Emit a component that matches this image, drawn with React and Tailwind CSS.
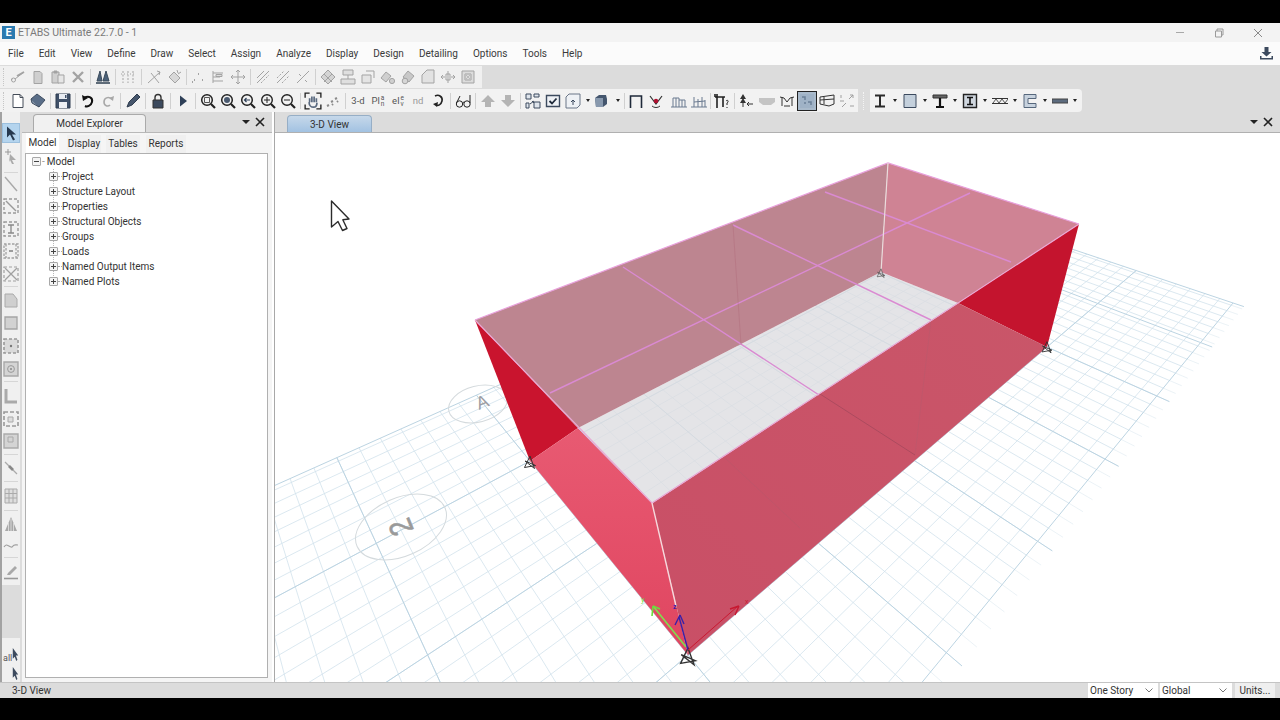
import React from "react";

/* ---------- ground grid (perspective plane of the model) ---------- */
const Q = [[530, 461], [881, 273], [1047, 347], [688, 655]];
function makeH() {
  const [[x0, y0], [x1, y1], [x2, y2], [x3, y3]] = Q;
  const dx1 = x1 - x2, dx2 = x3 - x2, sx = x0 - x1 + x2 - x3;
  const dy1 = y1 - y2, dy2 = y3 - y2, sy = y0 - y1 + y2 - y3;
  const den = dx1 * dy2 - dx2 * dy1;
  const g = (sx * dy2 - dx2 * sy) / den, h = (dx1 * sy - sx * dy1) / den;
  return [x1 - x0 + g * x1, x3 - x0 + h * x3, x0, y1 - y0 + g * y1, y3 - y0 + h * y3, y0, g, h, 1];
}
const H = makeH();
const fw = (u, v) => {
  const w = H[6] * u + H[7] * v + 1;
  return [(H[0] * u + H[1] * v + H[2]) / w, (H[3] * u + H[4] * v + H[5]) / w];
};
const inv = (x, y) => {
  const [a, b, c, d, e, f, g, h, i] = H;
  const A = e * i - f * h, B = c * h - b * i, C = b * f - c * e;
  const D = f * g - d * i, E = a * i - c * g, F = c * d - a * f;
  const G = d * h - e * g, I = b * g - a * h, J = a * e - b * d;
  const w = G * x + I * y + J;
  return [(A * x + B * y + C) / w, (D * x + E * y + F) / w];
};
const [UMAX, VMAX] = inv(1233, 303);
const VMIN = inv(450, 407)[1];
const UMIN = -0.95;
const EXT = 0.05;
const seg = (p, q) => `M${p[0].toFixed(1)} ${p[1].toFixed(1)}L${q[0].toFixed(1)} ${q[1].toFixed(1)}`;
const range = (a, b, s) => { const r = []; for (let n = Math.ceil(a / s); n * s <= b + 1e-6; n++) r.push(n * s); return r; };

const minorU = range(UMIN, UMAX, 1 / 28);
const minorV = range(VMIN, VMAX, 1 / 14);
const MINOR = minorU.map((u) => seg(fw(u, VMIN), fw(u, VMAX))).join("") + minorV.map((v) => seg(fw(UMIN, v), fw(UMAX, v))).join("");
const FADE = minorU.map((u) => seg(fw(u, VMAX), fw(u, VMAX + EXT))).join("");
const majorU = [...range(UMIN, 1, 0.25), inv(1136, 318)[0], UMAX];
const majorV = [VMIN, ...range(VMIN + 0.08, VMAX - 0.08, 0.5), VMAX];
const MAJOR = majorU.map((u) => seg(fw(u, VMIN), fw(u, VMAX + EXT))).join("") + majorV.map((v) => seg(fw(UMIN, v), fw(UMAX, v))).join("");

const Support = ({ x, y, s = 1, c = "#333" }) => (
  <g transform={`translate(${x} ${y}) scale(${s})`} fill="none" stroke={c} strokeWidth="1">
    <path d="M0 -6L-5.5 5.5L5.5 3.5L-5 -1L4.5 6.5Z" />
  </g>
);

function Model() {
  return (
    <svg viewBox="275 133 1005 549" className="block w-full h-full">
      <defs>
        <linearGradient id="wallL" x1="0" y1="0" x2="0" y2="1">
          <stop offset="0" stopColor="#e85a72" />
          <stop offset="1" stopColor="#e04560" />
        </linearGradient>
        <linearGradient id="wallR" x1="1" y1="0" x2="0" y2="1">
          <stop offset="0" stopColor="#c95669" />
          <stop offset="1" stopColor="#c94f66" />
        </linearGradient>
      </defs>
      <path d={MINOR} stroke="#d2e2ec" strokeWidth="0.8" fill="none" />
      <path d={FADE} stroke="#e6eff4" strokeWidth="0.8" fill="none" />
      <path d={MAJOR} stroke="#bcd4e2" strokeWidth="1" fill="none" />

      <ellipse cx="401" cy="527" rx="48" ry="29" transform="rotate(-24 401 527)" fill="none" stroke="#d4dadd" strokeWidth="1" />
      <ellipse cx="478" cy="404" rx="30" ry="18" transform="rotate(-14 478 404)" fill="none" stroke="#d4dadd" strokeWidth="1" />
      <text x="0" y="0" transform="translate(414 530) rotate(-112) scale(1 1.2)" fontSize="27" fill="#9a9a9a" stroke="#9a9a9a" strokeWidth="0.5" fontFamily="Liberation Sans, sans-serif">2</text>
      <text x="0" y="0" transform="translate(479 410) rotate(-22)" fontSize="18" fill="#9c9ca2" fontFamily="Liberation Sans, sans-serif">A</text>

      {/* floor band */}
      <polygon points="578,428 652,503 958,303 881,272" fill="#dcdce0" fillOpacity="0.78" />
      {/* dark side wedges */}
      <polygon points="475,320 530,461 578,428" fill="#c9142e" />
      <polygon points="1079,224 1047,347 958,303" fill="#c4142e" />
      {/* roof */}
      <polygon points="475,320 888,163 881,272 578,428" fill="#bd8590" />
      <polygon points="888,163 1079,224 958,303 881,272" fill="#cf8394" />
      {/* front walls */}
      <polygon points="530,461 578,428 652,503 688,655" fill="url(#wallL)" />
      <polygon points="652,503 958,303 1047,347 688,655" fill="url(#wallR)" />

      {/* roof beams */}
      <g stroke="#da8ad2" strokeWidth="1.4" fill="none">
        <path d="M970 193L550 393" />
        <path d="M825 192L1011 262" />
        <path d="M733 225L931 320" />
        <path d="M623 267L819 395" />
      </g>
      {/* faint lines */}
      <g stroke="#a95f70" strokeWidth="0.7" fill="none" strokeOpacity="0.4">
        <path d="M733 225L741 345" />
        <path d="M931 320L915 455" />
        <path d="M725 458L800 528" />
      </g>
      <path d="M820 394L915 455" stroke="#a4485c" strokeWidth="0.8" fill="none" />
      <path d="M578 428L652 503L958 303" stroke="#cfc3e4" strokeWidth="1" fill="none" />
      <path d="M475 320L888 163L1079 224" stroke="#e8a0dc" strokeWidth="1.2" fill="none" />
      <path d="M1079 224L652 503L475 320" stroke="#eaa8d4" strokeWidth="1.2" fill="none" />
      <path d="M888 163L881 272" stroke="#eadcdc" strokeWidth="1.2" />
      <path d="M652 503L676 606" stroke="#f6d8dc" strokeWidth="1.4" />

      <Support x={530} y={462} />
      <Support x={1047} y={347} s={0.9} />
      <Support x={881} y={273} s={0.7} c="#555" />
      <Support x={688} y={656} s={1.35} />

      {/* axes */}
      <path d="M686 647L653 606" stroke="#7ee04e" strokeWidth="1.6" fill="none" />
      <path d="M653 606L652 616M653 606L660 609" stroke="#6cdc3c" strokeWidth="1.6" fill="none" />
      <path d="M688 650L679 617" stroke="#3a20a8" strokeWidth="1.4" fill="none" />
      <path d="M680 615L675 625M680 615L684 624" stroke="#3a20a8" strokeWidth="1.4" fill="none" />
      <path d="M688 650L738 606" stroke="#c81830" strokeWidth="1" fill="none" />
      <path d="M739 606L730 609M739 606L735 615" stroke="#c81830" strokeWidth="1.4" fill="none" />
      <text x="673" y="609" fontSize="7" fill="#3a20a8" fontFamily="Liberation Sans, sans-serif" fontWeight="700">z</text>
      <text x="745" y="604" fontSize="7" fill="#c81830" fontFamily="Liberation Sans, sans-serif">x</text>
      <text x="641" y="602" fontSize="7" fill="#6cdc3c" fontFamily="Liberation Sans, sans-serif">y</text>

      {/* mouse cursor */}
      <path d="M331.5 201L331.5 227L338 221.5L342.5 230.5L347 228.5L342.8 219.8L349 219Z" fill="#fff" stroke="#2b2b2b" strokeWidth="1.4" strokeLinejoin="round" />
    </svg>
  );
}

/* ---------- icons ---------- */
const G = "#a3a3a3";
const S = ({ children, size = 16 }) => (
  <svg viewBox="0 0 16 16" width={size} height={size} fill="none" stroke={G} strokeWidth="1">{children}</svg>
);
const I = {
  scissors: <S><path d="M14 3L5 10M2 9.5L1.5 11" /><circle cx="3.5" cy="11" r="2" /><path d="M14 3L7 7" strokeWidth="2" /></S>,
  copy: <S><path d="M4 2.5h6l2 2v10H4z" fill="#cfcfcf" /></S>,
  paste: <S><path d="M2 3h7v11H2z" fill="#d0d0d0" /><path d="M8 6h6v8H8z" fill="#e6e6e6" /><path d="M4 2h3v2H4z" fill={G} /></S>,
  xBig: <S><path d="M3 3L13 13M13 3L3 13" strokeWidth="2.4" /></S>,
  towers: <S><path d="M5 2L7 12H2zM11 2L14 12H8z" fill="#4a6078" stroke="#3a4a5a" /><path d="M1 14h14" stroke="#3a4a5a" strokeWidth="1.6" /></S>,
  gridDots: <S><path d="M3 2v12M8 2v12M13 2v12" strokeDasharray="2 1.5" /><path d="M1 5h14" strokeDasharray="1 2" /></S>,
  crossLine: <S><path d="M2 14L14 3M5 4l8 10" /><path d="M11 2l3 1-1 3" /></S>,
  diamondCross: <S><path d="M3 8l5-5 6 6-5 5z" fill="#d8d8d8" /><path d="M11 1l1 3M15 3l-3 2" /></S>,
  dotsTri: <S><path d="M8 5h1M4 11h1M12 11h1M2 13h1" strokeWidth="2" /></S>,
  listAlign: <S><path d="M3 2v12M3 4h10M3 8h7M3 12h10" /><path d="M6 5.5h6v2H6z" fill="#ddd" /></S>,
  move: <S><path d="M8 1v14M1 8h14M6 3l2-2 2 2M6 13l2 2 2-2M3 6L1 8l2 2M13 6l2 2-2 2" /></S>,
  slashA: <S><path d="M2 14L14 2M2 9L9 2" /><path d="M6 14L14 6" strokeDasharray="2 1.5" /></S>,
  slashB: <S><path d="M2 14L14 2" /><path d="M2 9L9 2M7 14l7-7" strokeDasharray="2 1.5" /></S>,
  slashC: <S><path d="M2 14L14 2" /><path d="M4 5l2 2M10 11l2 2" /></S>,
  diamond: <S><path d="M1 8l7-7 7 7-7 7z" fill="#d4d4d4" /><path d="M4 5l8 8M12 5l-8 8" /></S>,
  stack: <S><path d="M3 1h10v5H3zM1 10h14v5H1z" fill="#dfdfdf" /><path d="M8 6v4" /></S>,
  boxSm: <S><path d="M2 6h9v8H2z" fill="#e4e4e4" /><path d="M6 2h8v7" /></S>,
  cube1: <S><path d="M1 9l5-6 5 4-5 6z" fill="#cfcfcf" /><circle cx="12" cy="12" r="2.6" fill="#cfcfcf" /></S>,
  cube2: <S><path d="M3 8l5-6 6 5-5 6z" fill="#c8c8c8" /><circle cx="5" cy="12" r="2.8" fill="#d6d6d6" /></S>,
  pageG: <S><path d="M2 14V6l5-5h7v13z" fill="#e2e2e2" /></S>,
  crossArrow: <S><path d="M8 2v12M2 8h3M11 8h3M6 5h4v6H6z" /><path d="M3 6L1 8l2 2M13 6l2 2-2 2" /></S>,
  boxBox: <S><path d="M2 2h12v12H2z" fill="#dcdcdc" /><path d="M5 5h6v6H5z" /><path d="M5 5l6 6M11 5l-6 6" stroke="#bbb" /></S>,

  page: <S><path d="M3 1.5h7l3 3v10H3z" fill="#fff" stroke="#444c58" /><path d="M10 1.5v3h3" stroke="#444c58" /></S>,
  open: <S><path d="M1 6l6-5 8 6-6 7z" fill="#5a6e88" stroke="#3d4c60" /><path d="M1 6l1 4 7 4" stroke="#3d4c60" fill="#8496ac" /></S>,
  save: <S><path d="M1 1h14v14H1z" fill="#3f5068" stroke="#2f3d50" /><path d="M4 1h8v5H4z" fill="#e8ecf2" stroke="none" /><path d="M4 9h8v6H4z" fill="#eef0f4" stroke="none" /><path d="M10 2h1.5v3H10z" fill="#3f5068" stroke="none" /></S>,
  undo: <S><path d="M4 5c5-3 9 0 8 4s-5 5-7 4" stroke="#111" strokeWidth="2" /><path d="M2 2l1 6 5-3z" fill="#111" stroke="none" /></S>,
  redo: <S><path d="M12 6c-4-3-8-1-8 3s4 5 6 3" stroke="#a8a8a8" strokeWidth="1.6" /><path d="M14 3l-1 5-4-3z" fill="#a8a8a8" stroke="none" /></S>,
  pencil: <S><path d="M2 14l2-5 8-8 3 3-8 8z" fill="#46566c" stroke="#2f3c4e" /></S>,
  lock: <S><path d="M5 7V4.5a3 3 0 0 1 6 0V7" stroke="#333" strokeWidth="1.4" /><path d="M3 7h10v8H3z" fill="#3c4a5e" stroke="#333" /></S>,
  play: <S><path d="M5 2.5l7 5.5-7 5.5z" fill="#2f4058" stroke="none" /></S>,
  zoomRect: <S><circle cx="7" cy="7" r="5.3" stroke="#222" strokeWidth="1.5" /><path d="M11 11l4 4" stroke="#222" strokeWidth="2.2" /><path d="M4.5 4.5h5v5h-5z" stroke="#555" /></S>,
  zoomFill: <S><circle cx="7" cy="7" r="5.3" stroke="#222" strokeWidth="1.5" /><path d="M11 11l4 4" stroke="#222" strokeWidth="2.2" /><circle cx="7" cy="7" r="3" fill="#4a5a70" stroke="none" /></S>,
  zoomBack: <S><circle cx="7" cy="7" r="5.3" stroke="#222" strokeWidth="1.5" /><path d="M11 11l4 4" stroke="#222" strokeWidth="2.2" /><path d="M10 7H4.5M6.5 5L4.5 7l2 2" stroke="#2f4058" strokeWidth="1.2" /></S>,
  zoomPlus: <S><circle cx="7" cy="7" r="5.3" stroke="#222" strokeWidth="1.4" /><path d="M11 11l4 4" stroke="#222" strokeWidth="2.2" /><path d="M4 7h6M7 4v6" stroke="#222" /></S>,
  zoomMinus: <S><circle cx="7" cy="7" r="5.3" stroke="#222" strokeWidth="1.4" /><path d="M11 11l4 4" stroke="#222" strokeWidth="2.2" /><path d="M4 7h6" stroke="#222" /></S>,
  hand: <S size={18}><path d="M1 5V1h4M11 1h4v4M15 11v4h-4M5 15H1v-4" stroke="#222" strokeWidth="1.2" /><path d="M5 9V5.5M7 9V4M9 9V4M11 9V5.5M4.5 9c0 3 2 4.5 4 4.5s3-1 3-4" stroke="#5a6a80" strokeWidth="1.5" /></S>,
  dots2: <S><path d="M2 13l2-1M6 9l2-1M10 6l2-1M12 9l1-1M7 12l1-1" stroke="#8a8a8a" strokeWidth="2" /></S>,
  rotate: <S><path d="M5 3c4-2 8 1 7 5s-4 5-6 4" stroke="#222" strokeWidth="1.6" /><path d="M3 11l5-2-1 5z" fill="#222" stroke="none" /></S>,
  glasses: <S><circle cx="4.5" cy="11" r="3.2" stroke="#222" /><circle cx="12" cy="11" r="3.2" stroke="#222" /><path d="M7.5 10c1-1 1.5-1 2 0M1.5 10L5 3M15 10V2" stroke="#222" /></S>,
  up: <S><path d="M8 2l7 7h-4v5H5V9H1z" fill="#b4b4b4" stroke="none" /></S>,
  down: <S><path d="M8 14l7-7h-4V2H5v5H1z" fill="#b4b4b4" stroke="none" /></S>,
  squares: <S><path d="M1 1h5v5H1zM9 1h5v3H9zM1 10h3v5H1zM9 9h6v6H9z" stroke="#3c4a5e" fill="#dfe5ec" /><path d="M7 8l2 2M5 11l4-3" stroke="#3c4a5e" /></S>,
  check: <S><path d="M1.5 2.5h13v11h-13z" fill="#eef1f5" stroke="#3c4a5e" strokeWidth="1.4" /><path d="M4.5 8l2.5 2.5 4.5-5" stroke="#1f2a3a" strokeWidth="1.8" /></S>,
  cubeUp: <S><path d="M1 4l3-3h11v11l-3 3H1z" fill="#eef1f5" stroke="#6a7688" /><path d="M8 12V7M6 9l2-2 2 2" stroke="#3c4a5e" /></S>,
  cubeDark: <S><path d="M2 5l4-3h7l1 4v5l-4 3H3z" fill="#44566e" stroke="none" /><path d="M2 5h8v9H3z" fill="#8899ae" stroke="none" /></S>,
  portal: <S><path d="M2.5 15V3h11v12" stroke="#1f2a3a" strokeWidth="1.6" /></S>,
  vPin: <S><path d="M2 3l6 8 6-8" stroke="#333" strokeWidth="1.2" /><circle cx="8" cy="8" r="2.2" fill="#b01030" stroke="none" /><path d="M4 13c2 2 6 2 8 0" stroke="#333" /></S>,
  frame1: <S><path d="M0 14h16M2 14V5h6v9M8 7h6v7M5 5v9M11 7v7" stroke="#6a7a90" /></S>,
  frame2: <S><path d="M0 14h16M3 14V4M7 14V6M11 14V4M14 14V7M3 9l11-1" stroke="#6a7a90" /></S>,
  frameQ: <S><path d="M1 4h10M3 1v14M9 4v10M1 1v3" stroke="#222" strokeWidth="1.6" /><path d="M12 8c2-2 3 1 1 2v2M13 14v1" stroke="#222" /></S>,
  treeArrow: <S><path d="M5 1l3 5H2zM5 5l3 5H2z" fill="#333" stroke="none" /><path d="M5 10v4" stroke="#333" /><path d="M15 11H9M11 9l-2 2 2 2" stroke="#333" /></S>,
  bowl: <S><path d="M0 5h16v4l-4 3H4L0 9z" fill="#c4c4c4" stroke="none" /></S>,
  mShape: <S><path d="M1 4l4 1 3 4 3-4 4-1M3 4v9M13 4v9M5 13h6" stroke="#333" /></S>,
  selected: <S><path d="M1 1h14v14H1z" fill="#9fb2c6" stroke="none" /><path d="M3 4h3v3M9 9h3v3M5 10h2" stroke="#6b8098" strokeWidth="1.5" /></S>,
  mask: <S><path d="M1 4l14-2v9l-5 2-9-2z" stroke="#333" /><path d="M1 7l14-1M5 4v7" stroke="#333" /></S>,
  arrowsG: <S><path d="M3 14l4-4M10 6l4-4M14 2v3M14 2h-3M2 5V2M1 8h4M11 13h4" stroke="#a0a0a0" /></S>,

  beamI: <S><path d="M3 2.5h10M3 13.5h10M8 2.5v11" stroke="#2a2a2a" strokeWidth="2" /></S>,
  rectBox: <S><path d="M2 1.5h12v13H2z" fill="#c4d0dc" stroke="#3c4a5e" /></S>,
  beamT: <S><path d="M1 2h14v3H1z" fill="#666" stroke="#333" /><path d="M8 5v8M4 14h8" stroke="#111" strokeWidth="2.2" /></S>,
  beamBox: <S><path d="M1.5 1.5h13v13h-13z" fill="#cfd6de" stroke="#222" strokeWidth="1.4" /><path d="M5 4.5h6M5 11.5h6M8 4.5v7" stroke="#111" strokeWidth="1.6" /></S>,
  truss: <S><path d="M0 5.5h16M0 10.5h16" stroke="#333" /><path d="M1 10l3-4 3 4 3-4 3 4 3-4" stroke="#555" /></S>,
  cBeam: <S><path d="M2 1.5h12v4H6v5h8v4H2z" fill="#c7d2de" stroke="#56677c" /></S>,
  bar: <S><path d="M0 6h16v4H0z" fill="#5c6b7e" stroke="#444" /></S>,

  arrowDark: <S size={17}><path d="M4 1l9 8H9l3 5-2 1-3-6-3 3z" fill="#26384e" stroke="none" /></S>,
  arrowCross: <S><path d="M5 0v6M2 3h6" stroke="#999" /><path d="M7 5l6 6H9l2 4h-2l-2-4-1 2z" fill="#aaa" stroke="none" /></S>,
  line: <S><path d="M2 1l12 14" stroke="#a8a8a8" strokeWidth="1.4" /></S>,
  dashDiag: <S><path d="M1 1h14v14H1z" strokeDasharray="3 2" stroke="#999" strokeWidth="1.4" /><path d="M3 3l10 10" stroke="#999" strokeWidth="1.4" /></S>,
  dashI: <S><path d="M1 1h14v14H1z" strokeDasharray="3 2" stroke="#999" strokeWidth="1.4" /><path d="M5 4h6M5 12h6M8 4v8" stroke="#888" strokeWidth="1.3" /></S>,
  dashCol: <S><path d="M1 1h14v14H1zM3 1v14M13 1v14" strokeDasharray="2.5 1.5" stroke="#a0a0a0" strokeWidth="1.3" /><path d="M6 8h4" stroke="#888" strokeWidth="1.6" /></S>,
  dashX: <S><path d="M1 1h14v14H1z" strokeDasharray="3 2" stroke="#a0a0a0" strokeWidth="1.2" /><path d="M2 2l12 12M14 2L2 14" stroke="#a0a0a0" strokeWidth="1.3" /></S>,
  pageShape: <S><path d="M2 2h8l4 5v8H2z" fill="#cfcfcf" stroke="#aaa" /></S>,
  square: <S><path d="M2 2h12v12H2z" fill="#d2d2d2" stroke="#a5a5a5" strokeWidth="1.3" /></S>,
  dashCenter: <S><path d="M1 1h14v14H1z" strokeDasharray="3 2" stroke="#999" strokeWidth="1.6" fill="#dadada" /><circle cx="8" cy="8" r="1.2" fill="#777" stroke="none" /></S>,
  circSq: <S><path d="M1 1h14v14H1z" fill="#d4d4d4" stroke="#a8a8a8" strokeWidth="1.4" /><circle cx="8" cy="8" r="3.4" stroke="#999" /><circle cx="8" cy="8" r="1" fill="#888" stroke="none" /></S>,
  lShape: <S><path d="M3 1v13h11" stroke="#aaa" strokeWidth="3" /></S>,
  dashDot: <S><path d="M1 1h14v14H1z" strokeDasharray="4 2" stroke="#999" strokeWidth="1.6" /><path d="M5 6h5v5H5z" stroke="#aaa" fill="#ddd" /></S>,
  squareIn: <S><path d="M1 1h14v14H1z" fill="#d4d4d4" stroke="#aaa" strokeWidth="1.4" /><path d="M5 4h5v5H5z" stroke="#aaa" /></S>,
  lineDots: <S><path d="M2 2l12 12" stroke="#aaa" strokeWidth="1.2" /><path d="M6 6l4 4" stroke="#888" strokeWidth="2.6" /></S>,
  gridI: <S><path d="M2 1h12v14H2zM2 5.5h12M2 10h12M6 1v14M10 1v14" stroke="#aaa" fill="#dedede" /></S>,
  treeI: <S><path d="M8 1l6 14H2z" fill="#a8a8a8" stroke="none" /><path d="M5.5 6v9M8 3v12M10.5 6v9" stroke="#d8d8d8" /></S>,
  wave: <S><path d="M1 9c2-3 3-2 5-1s3 2 4 0 3-1 5-1" stroke="#9f9f9f" strokeWidth="1.2" /></S>,
  penLine: <S><path d="M1 14.5h14" stroke="#999" strokeWidth="1.6" /><path d="M4 11l1-2 7-7 2 2-7 7z" fill="#a8a8a8" stroke="none" /></S>,
};

/* ---------- small building blocks ---------- */
const Btn = ({ name, w = "w-5" }) => (
  <div className={`${w} h-5 flex items-center justify-center shrink-0`}>{I[name]}</div>
);
const Sep = ({ w = "w-[5px]" }) => (
  <div className={`${w} h-[16px] flex justify-center shrink-0`}><div className="w-px h-full bg-[#d0d0d0]" /></div>
);
const Gap = ({ w }) => <div className={`${w} shrink-0`} />;
const Caret = ({ w = "w-[10px]" }) => (
  <div className={`${w} h-5 flex items-center justify-center shrink-0`}>
    <div className="w-0 h-0 border-x-[2.5px] border-x-transparent border-t-[3px] border-t-[#222]" />
  </div>
);
const TextBtn = ({ children, c = "text-[#555]" }) => (
  <div className={`w-5 h-5 flex items-center justify-center shrink-0 text-[9.5px] ${c}`}>{children}</div>
);
const Stack = ({ a, top, bottom, c }) => (
  <TextBtn c={c}>
    <span>{a}</span>
    <span className="flex flex-col text-[6.5px] leading-[6px] ml-[1px]"><span>{top}</span><span>{bottom}</span></span>
  </TextBtn>
);
const Grip = () => (
  <div className="w-[5px] h-[18px] shrink-0 border-l border-dotted border-[#c6c6c6] ml-[1px]" />
);

const Toolbar1 = () => (
  <div className="h-[22px] w-[482px] bg-[#f0f0f0] flex items-center pl-[2px]">
    <Grip />
    <Btn name="scissors" /><Btn name="copy" /><Btn name="paste" /><Btn name="xBig" />
    <Sep /><Btn name="towers" /><Sep /><Btn name="gridDots" /><Sep w="w-[6px]" /><Btn name="crossLine" /><Btn name="diamondCross" />
    <Sep w="w-[4px]" /><Btn name="dotsTri" /><Btn name="listAlign" /><Btn name="move" />
    <Sep /><Btn name="slashA" /><Btn name="slashB" /><Btn name="slashC" />
    <Sep /><Btn name="diamond" /><Btn name="stack" /><Btn name="boxSm" /><Btn name="cube1" /><Btn name="cube2" /><Btn name="pageG" /><Btn name="crossArrow" /><Btn name="boxBox" />
  </div>
);

const Toolbar2 = () => (
  <div className="h-[23px] w-[858px] bg-[#f2f2f2] flex items-center pl-[2px]">
    <Grip />
    <Btn name="page" /><Btn name="open" /><Sep /><Btn name="save" /><Sep /><Btn name="undo" /><Btn name="redo" />
    <Sep /><Btn name="pencil" /><Sep /><Btn name="lock" /><Sep /><Btn name="play" /><Sep />
    <Btn name="zoomRect" /><Btn name="zoomFill" /><Btn name="zoomBack" /><Btn name="zoomPlus" /><Btn name="zoomMinus" /><Sep />
    <Btn name="hand" /><Btn name="dots2" /><Sep />
    <TextBtn>3-d</TextBtn>
    <Stack a="Pl" top="a" bottom="n" />
    <Stack a="el" top="e" bottom="v" />
    <TextBtn c="text-[#999]">nd</TextBtn>
    <Btn name="rotate" /><Sep /><Btn name="glasses" /><Sep /><Btn name="up" /><Btn name="down" /><Sep />
    <Btn name="squares" /><Btn name="check" /><Btn name="cubeUp" /><Caret /><Btn name="cubeDark" w="w-[16px]" /><Gap w="w-[4px]" /><Caret /><Sep w="w-[3px]" />
    <Btn name="portal" /><Btn name="vPin" /><Gap w="w-[3px]" /><Btn name="frame1" /><Btn name="frame2" /><Sep w="w-[3px]" /><Btn name="frameQ" /><Sep w="w-[4px]" /><Btn name="treeArrow" />
    <Gap w="w-[1px]" /><Btn name="bowl" /><Btn name="mShape" />
    <div className="w-5 h-5 flex items-center justify-center shrink-0 border border-[#222] bg-[#a9bacb]">{I.selected}</div>
    <Btn name="mask" /><Btn name="arrowsG" />
  </div>
);

const Toolbar3 = () => (
  <div className="h-[23px] w-[212px] bg-[#f2f2f2] rounded-r-sm flex items-center">
    <Btn name="beamI" /><Caret />
    <Btn name="rectBox" /><Caret />
    <Btn name="beamT" /><Caret />
    <Btn name="beamBox" /><Caret />
    <Btn name="truss" /><Caret />
    <Btn name="cBeam" /><Caret />
    <Btn name="bar" /><Caret />
  </div>
);

const Menu = ["File", "Edit", "View", "Define", "Draw", "Select", "Assign", "Analyze", "Display", "Design", "Detailing", "Options", "Tools", "Help"];
const TREE = ["Project", "Structure Layout", "Properties", "Structural Objects", "Groups", "Loads", "Named Output Items", "Named Plots"];

const Box = ({ minus }) => (
  <div className="relative w-[9px] h-[9px] border border-[#a8a8a8] bg-[#f4f4f4] shrink-0 flex items-center justify-center rounded-[1px]">
    <div className="w-[5px] h-px bg-[#444]" />
    {!minus && <div className="absolute w-px h-[5px] bg-[#444]" />}
  </div>
);

const StripIcon = ({ name, h = "h-[23px]" }) => (
  <div className={`${h} flex items-center justify-center`}>{I[name]}</div>
);
const StripSep = () => <div className="h-px mx-[2px] my-[1px] bg-[#d6d6d6]" />;

const Close = ({ c = "#222" }) => (
  <svg width="10" height="10" viewBox="0 0 10 10" fill="none" stroke={c} strokeWidth="1.6"><path d="M1 1l8 8M9 1l-8 8" /></svg>
);

export default function App() {
  return (
    <div className="w-[1280px] h-[720px] overflow-hidden bg-black flex flex-col text-[10px] leading-none text-[#333]" style={{ fontFamily: 'Roboto, "Noto Sans", sans-serif' }}>
      <div className="h-[23px] shrink-0 bg-black" />
      {/* title bar */}
      <div className="h-[19px] shrink-0 bg-[#f3f3f3] flex items-center pl-[2px]">
        <div className="w-[13px] h-[13px] bg-[#2a7ab0] text-white text-[11px] font-bold flex items-center justify-center">E</div>
        <span className="ml-[3px] pt-px text-[10.5px] text-[#7a7a7a]">ETABS Ultimate 22.7.0 - 1</span>
        <div className="ml-auto flex items-center">
          <div className="w-[39px] flex justify-center"><div className="w-[8px] h-px bg-[#a8a8a8]" /></div>
          <div className="w-[39px] flex justify-center">
            <svg width="10" height="10" viewBox="0 0 10 10" fill="none" stroke="#9a9a9a"><path d="M1.5 3h6v6h-6zM3 3V1h6v6H7.5" /></svg>
          </div>
          <div className="w-[39px] flex justify-center"><svg width="10" height="10" viewBox="0 0 10 10" fill="none" stroke="#8a8a8a"><path d="M1 1l8 8M9 1l-8 8" /></svg></div>
          <div className="w-[3px]" />
        </div>
      </div>
      {/* menu bar */}
      <div className="h-[23px] shrink-0 bg-[#fbfbfb] flex items-center pl-[8px] gap-[15px] text-[#3a3a3a]">
        {Menu.map((m) => <span key={m} className="pt-px">{m}</span>)}
        <div className="ml-auto mr-[6px]">
          <svg width="15" height="15" viewBox="0 0 15 15" fill="#3c4a5e"><path d="M5.5 1h4v5h3L7.5 10.5 2.5 6h3z" /><path d="M1 10v3.5h13V10h-1.5v2h-10v-2z" /></svg>
        </div>
      </div>
      {/* toolbars */}
      <div className="h-[47px] shrink-0 bg-[#dcdcdc] flex flex-col pt-[1px] gap-px">
        <Toolbar1 />
        <div className="flex">
          <Toolbar2 />
          <div className="w-[12px] flex justify-center items-center"><div className="w-[3px] h-[18px] border-l border-dotted border-[#f4f4f4]" /></div>
          <Toolbar3 />
        </div>
      </div>
      {/* body */}
      <div className="h-[570px] shrink-0 flex">
        {/* left tool strip */}
        <div className="w-[22px] shrink-0 flex bg-[#dcdcdc]">
          <div className="w-[2px] bg-[#a2a2a2]" />
          <div className="w-[18px] bg-[#f0f0f0] flex flex-col pt-[11px]">
            <div className="h-[20px] bg-[#b4d4ee] flex items-center justify-center border border-[#9cc0de]">{I.arrowDark}</div>
            <StripIcon name="arrowCross" h="h-[28px]" />
            <StripSep />
            <StripIcon name="line" h="h-[20px]" />
            <StripIcon name="dashDiag" />
            <StripIcon name="dashI" />
            <StripIcon name="dashCol" h="h-[22px]" />
            <StripIcon name="dashX" />
            <StripSep />
            <StripIcon name="pageShape" h="h-[24px]" />
            <StripIcon name="square" h="h-[22px]" />
            <StripIcon name="dashCenter" />
            <StripIcon name="circSq" />
            <StripSep />
            <StripIcon name="lShape" h="h-[26px]" />
            <StripIcon name="dashDot" h="h-[20px]" />
            <StripIcon name="squareIn" h="h-[24px]" />
            <StripSep />
            <StripIcon name="lineDots" h="h-[24px]" />
            <StripSep />
            <StripIcon name="gridI" h="h-[26px]" />
            <StripSep />
            <StripIcon name="treeI" h="h-[24px]" />
            <StripIcon name="wave" h="h-[20px]" />
            <StripSep />
            <StripIcon name="penLine" h="h-[26px]" />
            <div className="h-[53px] bg-[#dcdcdc]" />
            <div className="h-[28px] relative flex items-end text-[9px] text-[#555] pb-[3px] pl-[1px]">
              <span>all</span>
              <div className="absolute right-[1px] top-[9px]">
                <svg width="7" height="15" viewBox="0 0 9 14" fill="#3c4a5e" preserveAspectRatio="none"><path d="M1 1l7 7H5l2 4-1.5 1-2-4L1 11z" /></svg>
              </div>
            </div>
            <div className="h-[16px] flex justify-end pr-[1px] overflow-hidden">
              <svg width="7" height="14" viewBox="0 0 9 13" fill="#3c4a5e" preserveAspectRatio="none"><path d="M1 1l7 7H5l2 4-1.5 1-2-4L1 11z" /></svg>
            </div>
          </div>
          <div className="w-[2px] bg-[#dcdcdc]" />
        </div>

        {/* model explorer */}
        <div className="w-[250px] shrink-0 bg-[#f5f5f5] flex flex-col">
          <div className="h-[21px] shrink-0 bg-[#dcdcdc] flex items-end pl-[11px] border-b border-[#b8b8b8]">
            <div className="w-[113px] h-[18px] pt-px bg-[#f1f1f1] border border-b-0 border-[#aaa] rounded-t-[4px] flex items-center justify-center text-[#333]">Model Explorer</div>
            <div className="ml-auto h-full flex items-center gap-[5px] pr-[7px]">
              <div className="w-0 h-0 border-x-[4px] border-x-transparent border-t-[4px] border-t-[#222]" />
              <Close />
            </div>
          </div>
          <div className="h-[20px] shrink-0 flex items-center pl-[4px]">
            <div className="h-full w-[33px] bg-white flex items-center justify-center">Model</div>
            <div className="ml-[8px] w-[34px] flex justify-center bg-[#f0f0f0] h-[18px] items-center self-end">Display</div>
            <div className="ml-[5px] w-[34px] flex justify-center bg-[#f0f0f0] h-[18px] items-center self-end">Tables</div>
            <div className="ml-[6px] w-[40px] flex justify-center bg-[#f0f0f0] h-[18px] items-center self-end">Reports</div>
          </div>
          <div className="ml-[3px] mr-[4px] h-[525px] bg-white border border-[#b0b0b0]">
            <div className="h-[15px] flex items-center pl-[6px] gap-[1px]">
              <Box minus /><span className="text-[#999] mr-[1px]">-</span><span>Model</span>
            </div>
            <div className="relative">
              <div className="absolute left-[27px] top-0 bottom-[7px] border-l border-dotted border-[#b8b8b8]" />
              {TREE.map((t) => (
                <div key={t} className="relative h-[15px] flex items-center pl-[23px]">
                  <Box /><span className="w-[4px] border-t border-dotted border-[#aaa]" /><span>{t}</span>
                </div>
              ))}
            </div>
          </div>
        </div>

        {/* splitter */}
        <div className="w-[3px] shrink-0 bg-white border-r border-[#a8a8a8]" />

        {/* 3d view */}
        <div className="flex-1 flex flex-col min-w-0 bg-white">
          <div className="h-[21px] shrink-0 bg-[#dcdcdc] flex items-end pl-[12px] border-b border-[#b0b0b0]">
            <div className="w-[85px] h-[17px] pt-px bg-gradient-to-b from-[#c6d8ea] to-[#a2c2e2] border border-b-0 border-[#96aec6] rounded-t-[4px] flex items-center justify-center text-[#333]">3-D View</div>
            <div className="ml-auto h-full flex items-center gap-[5px] pr-[7px]">
              <div className="w-0 h-0 border-x-[4px] border-x-transparent border-t-[4px] border-t-[#222]" />
              <Close />
            </div>
          </div>
          <div className="flex-1 min-h-0"><Model /></div>
        </div>
      </div>
      {/* status bar */}
      <div className="h-[16px] shrink-0 bg-[#dcdcdc] border-t border-[#c4c4c4] flex items-center pl-[12px]">
        <span className="text-[#333] pt-px">3-D View</span>
        <div className="ml-auto flex items-stretch h-full gap-[2px] pr-[5px]">
          {[["One Story", "w-[70px]"], ["Global", "w-[72px]"]].map(([t, w]) => (
            <div key={t} className={`${w} bg-white flex items-center pl-[2px] pr-[5px] justify-between`}>
              <span className="pt-px">{t}</span>
              <svg width="8" height="5" viewBox="0 0 8 5" fill="none" stroke="#777"><path d="M.5 .5L4 4L7.5 .5" /></svg>
            </div>
          ))}
          <div className="w-[40px] ml-[1px] bg-[#efefef] flex items-center justify-center pt-px">Units...</div>
        </div>
      </div>
      <div className="flex-1 bg-black" />
    </div>
  );
}
